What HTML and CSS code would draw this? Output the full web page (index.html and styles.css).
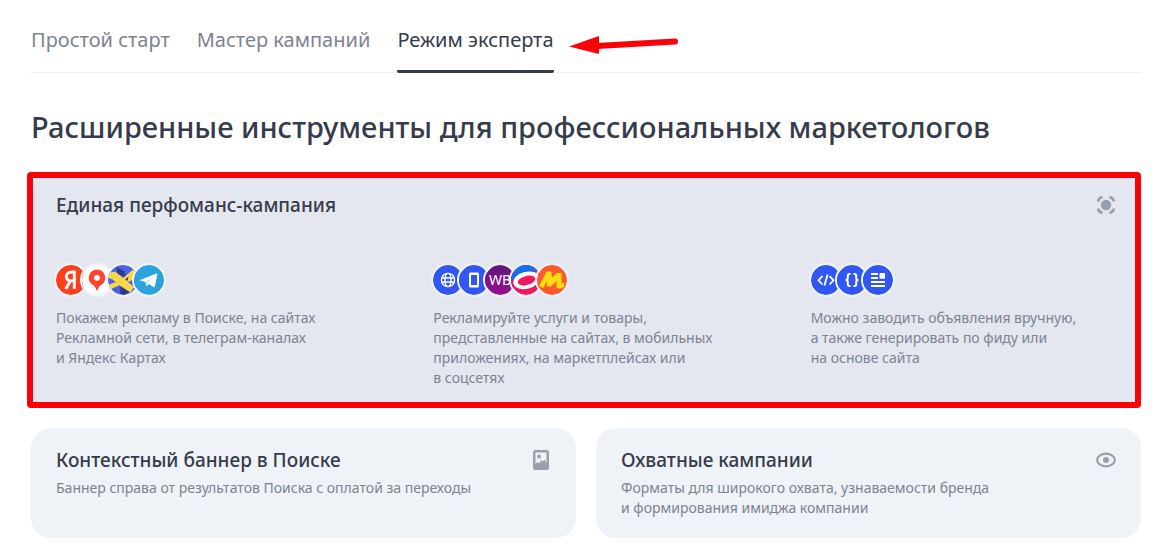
FILE: index.html
```html
<!DOCTYPE html>
<html lang="ru">
<head>
    <meta charset="UTF-8">
    <meta name="viewport" content="width=device-width, initial-scale=1.0">
    <title>Режим эксперта</title>
    <link rel="stylesheet" href="styles.css">
</head>
<body>

    <main class="container">
        <nav class="tabs">
            <button type="button" class="tab">Простой старт</button>
            <button type="button" class="tab">Мастер кампаний</button>
            <button type="button" class="tab active">Режим эксперта</button>
            <svg class="arrow" width="110" height="22" viewBox="0 0 110 22">
                <path d="M28 12 L106 7.500" stroke="#f80308" stroke-width="6" stroke-linecap="round"/>
                <path d="M0 12.500 L30 2 V20 Z" fill="#f80308"/>
            </svg>
        </nav>

        <h1>Расширенные инструменты для профессиональных маркетологов</h1>

        <section class="featured">
            <div class="card-head">
                <h2>Единая перфоманс-кампания</h2>
                <svg class="card-icon" width="20" height="20" viewBox="0 0 20 20">
                    <circle cx="10" cy="10" r="5.200" fill="#99a0ad"/>
                    <path d="M2 6.500 Q2.500 3 6.500 2 M13.500 2 Q17.500 3 18 6.500 M18 13.500 Q17.500 17 13.500 18 M6.500 18 Q2.500 17 2 13.500" fill="none" stroke="#99a0ad" stroke-width="2.600"/>
                </svg>
            </div>
            <div class="columns">
                <div class="column">
                    <div class="badges">
                        <svg class="badge" viewBox="0 0 30 30">
                            <circle cx="15" cy="15" r="15" fill="#fc3f1d"/>
                            <path d="M18.300 24 V7 H15.800 C12.500 7 10.300 8.900 10.300 11.600 C10.300 14.300 12.400 15.900 15.800 15.900 H18.300 M14.600 15.500 L9.700 24" fill="none" stroke="#fff" stroke-width="2.900"/>
                        </svg>
                        <svg class="badge" viewBox="0 0 30 30">
                            <circle cx="15" cy="15" r="15" fill="#fff"/>
                            <path d="M15 4.500 A8.300 8.300 0 0 1 19.800 19.500 Q16.500 21 15.700 25 H14.300 Q13.500 21 10.200 19.500 A8.300 8.300 0 0 1 15 4.500 Z" fill="#f43"/>
                            <circle cx="15" cy="12.800" r="2.900" fill="#fff"/>
                        </svg>
                        <svg class="badge" viewBox="0 0 30 30">
                            <circle cx="15" cy="15" r="15" fill="#4a62e8"/>
                            <path d="M8 2 L16 6 L18 12 L10 9 Z M13 19 L24 25 L17 30 L12 29 Z" fill="#2c3b87"/>
                            <path d="M2 7.500 L7 6.500 L26 22 L22.500 27.500 L14 22 L4 14 L0 13 Z" fill="#fcd748"/>
                            <path d="M0 20 L13 15 L25 4.500 L30 12 L20 17 L12 20 L3 24 Z" fill="#fcd748"/>
                            <path d="M17 14.500 L20.500 11.500 L19.500 16 Z" fill="#3c4170"/>
                        </svg>
                        <svg class="badge" viewBox="0 0 30 30">
                            <circle cx="15" cy="15" r="15" fill="#2ba3df"/>
                            <path d="M6 15 L22.500 8.500 Q23.500 8.300 23.300 9.800 L20.800 21.500 Q20.400 22.600 19 21.800 L15 19 L12.800 21 Q12.200 21.400 12.100 20.500 L11.500 17 L6.200 15.600 Q5.500 15.300 6 15 Z" fill="#fff"/>
                            <path d="M11.800 17 L20 11.300 L13.800 18 L12.500 20.600 Z" fill="#bfe2f5"/>
                        </svg>
                    </div>
                    <p>Покажем рекламу в Поиске, на сайтах<br>Рекламной сети, в телеграм-каналах<br>и Яндекс Картах</p>
                </div>
                <div class="column">
                    <div class="badges">
                        <svg class="badge" viewBox="0 0 30 30">
                            <circle cx="15" cy="15" r="15" fill="#3157f2"/>
                            <g fill="none" stroke="#fff" stroke-width="1.400">
                                <circle cx="15" cy="15" r="6.600"/>
                                <ellipse cx="15" cy="15" rx="3" ry="6.600"/>
                                <path d="M8.500 13 H21.500 M8.500 17 H21.500"/>
                            </g>
                        </svg>
                        <svg class="badge" viewBox="0 0 30 30">
                            <circle cx="15" cy="15" r="15" fill="#3157f2"/>
                            <path fill-rule="evenodd" d="M11.500 7.500 H18.500 Q20 7.500 20 9 V21 Q20 22.500 18.500 22.500 H11.500 Q10 22.500 10 21 V9 Q10 7.500 11.500 7.500 Z M12 10 V20 H18 V10 Z" fill="#fff"/>
                        </svg>
                        <svg class="badge" viewBox="0 0 30 30">
                            <defs>
                                <linearGradient id="wb" x1="0" y1="0" x2="0" y2="1">
                                    <stop offset="0" stop-color="#5f177c"/>
                                    <stop offset="1" stop-color="#9a0d92"/>
                                </linearGradient>
                            </defs>
                            <circle cx="15" cy="15" r="15" fill="url(#wb)"/>
                            <text class="wb" x="4" y="20">WB</text>
                        </svg>
                        <svg class="badge" viewBox="0 0 30 30">
                            <circle cx="15" cy="15" r="15" fill="#f3175d"/>
                            <path d="M0 15 A15 15 0 0 1 28 7 Q20 5 12 8 Q4 11 0 17 Z" fill="#176fe9"/>
                            <ellipse cx="15.500" cy="15.300" rx="13.500" ry="8.500" fill="#fff" transform="rotate(-14 15.500 15.300)"/>
                            <ellipse cx="15.500" cy="15.500" rx="9" ry="4.500" fill="#f3175d" transform="rotate(-14 15.500 15.500)"/>
                        </svg>
                        <svg class="badge" viewBox="0 0 30 30">
                            <circle cx="15" cy="15" r="15" fill="#fc5a2c"/>
                            <path d="M2 21 L9.500 6.500 H14.500 L15 12.500 L20 8 H24.500 V18.500 L27 17.500 L27.500 21.500 Q23 25.500 19.500 22.500 V16 L14 21.500 H10 L9.500 16 L6.500 23 Z" fill="#ffdc12"/>
                        </svg>
                    </div>
                    <p>Рекламируйте услуги и товары,<br>представленные на сайтах, в мобильных<br>приложениях, на маркетплейсах или<br>в соцсетях</p>
                </div>
                <div class="column">
                    <div class="badges">
                        <svg class="badge" viewBox="0 0 30 30">
                            <circle cx="15" cy="15" r="15" fill="#3157f2"/>
                            <path d="M11.500 11 L7.500 15.300 L11.500 19.500 M18.500 11 L22.500 15.300 L18.500 19.500 M16.600 9.500 L13.400 20.500" fill="none" stroke="#fff" stroke-width="1.800"/>
                        </svg>
                        <svg class="badge" viewBox="0 0 30 30">
                            <circle cx="15" cy="15" r="15" fill="#3157f2"/>
                            <path d="M13.500 9 H12.300 Q10.800 9 10.800 10.700 V13 Q10.800 15 8.500 15 Q10.800 15 10.800 17 V19.300 Q10.800 21 12.300 21 H13.500 M16.500 9 H17.700 Q19.200 9 19.200 10.700 V13 Q19.200 15 21.500 15 Q19.200 15 19.200 17 V19.300 Q19.200 21 17.700 21 H16.500" fill="none" stroke="#fff" stroke-width="2"/>
                        </svg>
                        <svg class="badge" viewBox="0 0 30 30">
                            <circle cx="15" cy="15" r="15" fill="#3157f2"/>
                            <path d="M8 9 H15 M8 13 H15 M8 17 H22 M8 21 H22" stroke="#fff" stroke-width="1.800"/>
                            <rect x="16.500" y="8" width="5.500" height="5.800" rx="1" fill="#fff"/>
                        </svg>
                    </div>
                    <p>Можно заводить объявления вручную,<br>а также генерировать по фиду или<br>на основе сайта</p>
                </div>
            </div>
        </section>

        <div class="cards">
            <section class="card">
                <div class="card-head">
                    <h2>Контекстный баннер в Поиске</h2>
                    <svg class="card-icon" width="20" height="20" viewBox="0 0 20 20">
                        <path fill-rule="evenodd" d="M4.500 0 H15.500 Q18 0 18 2.500 V17.500 Q18 20 15.500 20 H4.500 Q2 20 2 17.500 V2.500 Q2 0 4.500 0 Z M4.500 2.500 V14 L6.500 12 L8 13.500 L10.500 10 L12 11.500 L13.500 9.500 L15.500 13 V2.500 Z" fill="#99a0ad"/>
                        <circle cx="8" cy="6.500" r="1.900" fill="#99a0ad"/>
                    </svg>
                </div>
                <p>Баннер справа от результатов Поиска с оплатой за переходы</p>
            </section>
            <section class="card">
                <div class="card-head">
                    <h2>Охватные кампании</h2>
                    <svg class="card-icon" width="20" height="20" viewBox="0 0 20 20">
                        <ellipse cx="10" cy="10" rx="8.900" ry="6.300" fill="none" stroke="#99a0ad" stroke-width="2.200"/>
                        <circle cx="10" cy="10" r="3" fill="#99a0ad"/>
                    </svg>
                </div>
                <p>Форматы для широкого охвата, узнаваемости бренда<br>и формирования имиджа компании</p>
            </section>
        </div>
    </main>

</body>
</html>
```
FILE: styles.css
```css
body {
    font-family: "Noto Sans", "Open Sans", sans-serif;
    margin: 0;
    background-color: #fff;
    color: #363b4b;
}
.container {
    padding: 20px 21px 22px 31px;
}
h1, h2, p {
    margin: 0;
    font-weight: 500;
}
.tabs {
    display: flex;
    align-items: flex-start;
    gap: 27px;
    height: 52px;
    border-bottom: 1px solid #f1f1f4;
}
.tab {
    height: 53px;
    padding: 0 0 10px;
    border: none;
    border-bottom: 3px solid transparent;
    background: none;
    font-family: inherit;
    font-size: 20px;
    line-height: 40px;
    color: #7c8391;
    white-space: nowrap;
    cursor: pointer;
}
.tab.active {
    color: #363b4b;
    border-bottom-color: #363b4b;
    border-radius: 2px;
}
.arrow {
    flex: none;
    margin: 14px 0 0 -12px;
}
h1 {
    margin: 34px 0 25px;
    font-size: 29px;
    line-height: 40px;
    white-space: nowrap;
}
h2 {
    font-size: 19px;
    line-height: 24px;
}
p {
    font-size: 14px;
    line-height: 20px;
    font-weight: 400;
    color: #7c8391;
    white-space: nowrap;
}
.featured {
    margin: 0 0 20px -4px;
    padding: 15px 19px 14px 23px;
    border: 6px solid #f80308;
    border-radius: 4px;
    background: #e4e6f0;
}
.card-head {
    display: flex;
    justify-content: space-between;
    align-items: center;
}
.card-icon {
    flex: none;
}
.columns {
    display: grid;
    grid-template-columns: repeat(3, 1fr);
    gap: 72px;
    margin-top: 48px;
}
.column {
    min-width: 0;
}
.badges {
    display: flex;
    margin-bottom: 13px;
}
.badge {
    width: 30px;
    height: 30px;
    border-radius: 50%;
    box-shadow: 0 0 0 2px #f1f3fa;
}
.badge + .badge {
    margin-left: -4px;
}
.wb {
    font-family: "Noto Sans", sans-serif;
    font-size: 14px;
    fill: #fff;
}
.cards {
    display: grid;
    grid-template-columns: 1fr 1fr;
    gap: 20px;
}
.card {
    padding: 20px 25px;
    border-radius: 20px;
    background: #eff2f7;
}
.card .card-head {
    margin-bottom: 6px;
}
```
